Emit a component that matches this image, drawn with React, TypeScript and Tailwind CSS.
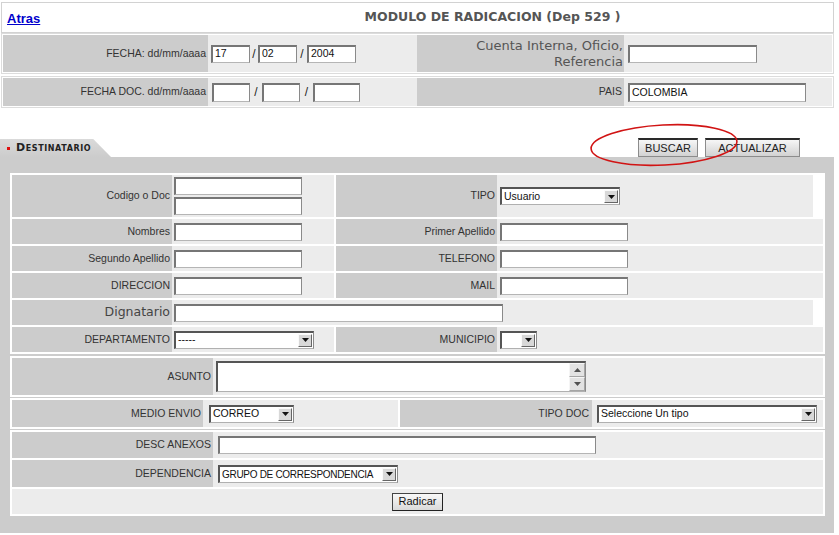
import React from "react"

const label = "flex items-center justify-end bg-[#cccccc] pr-[2px] font-['Liberation_Sans'] text-[10.5px] text-[#333]"
const cell = "flex items-center bg-[#ececec]"

function Field({ w, h = "h-[18px]", value }: { w: string; h?: string; value?: string }) {
  return (
    <div
      className={`${w} ${h} flex items-center border border-l-2 border-t-2 border-[#767676] border-b-[#b5b5b5] border-r-[#8a8a8a] bg-white pl-[2px] font-['Liberation_Sans'] text-[10.5px] text-[#111]`}
    >
      {value}
    </div>
  )
}

function Arrow({ up = false }: { up?: boolean }) {
  return (
    <svg width="7" height="4" viewBox="0 0 7 4" className={up ? "rotate-180" : ""}>
      <path d="M0 0h7L3.5 4z" fill="#111" />
    </svg>
  )
}

function Select({ w, value, text = "text-[10.5px]" }: { w: string; value?: string; text?: string }) {
  return (
    <div
      className={`${w} flex h-[18px] items-stretch border border-l-2 border-t-2 border-[#555] border-b-[#b0b0b0] border-r-[#8a8a8a] bg-white`}
    >
      <span className={`flex flex-1 items-center overflow-hidden whitespace-nowrap pl-[2px] font-['Liberation_Sans'] ${text} text-[#111]`}>
        {value}
      </span>
      <span className="my-[1px] mr-[1px] flex w-[14px] shrink-0 items-center justify-center border border-[#fafafa] border-b-[#666] border-r-[#666] bg-[#d8d8d8]">
        <Arrow />
      </span>
    </div>
  )
}

function TopButton({ w, children }: { w: string; children: React.ReactNode }) {
  return (
    <div
      className={`${w} flex h-[19px] items-center justify-center border border-t-2 border-[#8c8c8c] border-t-[#2a2a2a] bg-gradient-to-b from-[#f6f6f6] to-[#d2d2d2] font-['Liberation_Sans'] text-[11px] text-[#222]`}
    >
      {children}
    </div>
  )
}

export default function App() {
  return (
    <div className="relative h-[535px] w-[839px] overflow-hidden bg-white font-['Liberation_Sans']">
      {/* cabecera y fechas */}
      <div className="ml-[1px] w-[833px] pt-[2px]">
        <div className="flex h-[31px] items-center border border-[#d2d2d2]">
          <div className="w-[150px] pl-[5px]">
            <a href="#" className="text-[13px] font-bold text-[#0000cc] underline">
              Atras
            </a>
          </div>
          <div className="flex-1 text-center font-['DejaVu_Sans'] text-[12.5px] font-bold text-[#555]">
            MODULO DE RADICACION (Dep 529 )
          </div>
        </div>

        <div className="flex h-[41px] border border-[#dcdcdc] p-[1px]">
          <div className={`${label} w-[205px]`}>FECHA: dd/mm/aaaa</div>
          <div className={`${cell} w-[209px] pl-[3px]`}>
            <Field w="w-[39px]" value="17" />
            <span className="w-[8px] text-center text-[12px] text-[#222]">/</span>
            <Field w="w-[39px]" value="02" />
            <span className="w-[10px] text-center text-[12px] text-[#222]">/</span>
            <Field w="w-[49px]" value="2004" />
          </div>
          <div className="flex w-[207px] items-center justify-end bg-[#cccccc] pr-[1px] text-right font-['DejaVu_Sans'] text-[13px] leading-[16px] text-[#555]">
            Cuenta Interna, Oficio,
            <br />
            Referencia
          </div>
          <div className={`${cell} flex-1 pl-[4px]`}>
            <Field w="w-[129px]" />
          </div>
        </div>

        <div className="mt-[2px] flex h-[32px] border border-[#dcdcdc] p-[1px]">
          <div className={`${label} w-[205px]`}>FECHA DOC. dd/mm/aaaa</div>
          <div className={`${cell} w-[209px] pl-[4px]`}>
            <Field w="w-[38px]" h="h-[19px]" />
            <span className="w-[12px] text-center text-[12px] text-[#222]">/</span>
            <Field w="w-[38px]" h="h-[19px]" />
            <span className="w-[13px] text-center text-[12px] text-[#222]">/</span>
            <Field w="w-[47px]" h="h-[19px]" />
          </div>
          <div className={`${label} w-[207px]`}>PAIS</div>
          <div className={`${cell} flex-1 pl-[4px]`}>
            <Field w="w-[178px]" h="h-[19px]" value="COLOMBIA" />
          </div>
        </div>
      </div>

      {/* pestaña y botones */}
      <div className="mt-[30px] flex h-[19px] items-end justify-between">
        <div className="flex h-[18px] w-[111px] items-center bg-gradient-to-b from-[#dadada] to-[#cccccc] pl-[7px] [clip-path:polygon(0_0,84%_0,100%_100%,0_100%)]">
          <span className="mr-[6px] h-[3px] w-[3px] shrink-0 bg-[#e01010]" />
          <span className="whitespace-nowrap font-['DejaVu_Sans'] text-[11px] font-bold tracking-[0.6px] text-[#222] [font-variant:small-caps]">
            Destinatario
          </span>
        </div>
        <div className="mr-[39px] flex gap-[7px] self-start">
          <TopButton w="w-[60px]">BUSCAR</TopButton>
          <TopButton w="w-[95px]">ACTUALIZAR</TopButton>
        </div>
      </div>

      {/* panel destinatario */}
      <div className="w-[834px] bg-[#cccccc] pb-[17px] pl-[10px] pr-[9px] pt-[16px]">
        {/* bloque datos persona */}
        <div className="flex flex-col gap-[2px] bg-white p-[2px]">
          <div className="mr-[10px] flex h-[42px]">
            <div className={`${label} w-[160px] pr-[1px]`}>Codigo o Doc</div>
            <div className={`${cell} w-[162px] flex-col items-start justify-center gap-[2px] pl-[2px]`}>
              <Field w="w-[128px]" />
              <Field w="w-[128px]" />
            </div>
            <div className="w-[2px]" />
            <div className={`${label} w-[161px]`}>TIPO</div>
            <div className={`${cell} flex-1 pl-[3px]`}>
              <Select w="w-[120px]" value="Usuario" />
            </div>
          </div>
          {[
            ["Nombres", "Primer Apellido"],
            ["Segundo Apellido", "TELEFONO"],
            ["DIRECCION", "MAIL"],
          ].map(([a, b]) => (
            <div key={a} className="flex h-[25px]">
              <div className={`${label} w-[160px] pr-[1px]`}>{a}</div>
              <div className={`${cell} w-[162px] pl-[2px]`}>
                <Field w="w-[128px]" />
              </div>
              <div className="w-[2px]" />
              <div className={`${label} w-[161px]`}>{b}</div>
              <div className={`${cell} flex-1 pl-[3px]`}>
                <Field w="w-[128px]" />
              </div>
            </div>
          ))}
          <div className="mr-[10px] flex h-[25px]">
            <div className="flex w-[160px] items-center justify-end bg-[#cccccc] pr-[2px] font-['DejaVu_Sans'] text-[12.5px] text-[#444]">
              Dignatario
            </div>
            <div className={`${cell} flex-1 pl-[2px]`}>
              <Field w="w-[329px]" />
            </div>
          </div>
          <div className="flex h-[25px]">
            <div className={`${label} w-[160px] pr-[1px]`}>DEPARTAMENTO</div>
            <div className={`${cell} w-[162px] pl-[2px]`}>
              <Select w="w-[140px]" value="-----" />
            </div>
            <div className="w-[2px]" />
            <div className={`${label} w-[161px]`}>MUNICIPIO</div>
            <div className={`${cell} flex-1 pl-[3px]`}>
              <Select w="w-[37px]" />
            </div>
          </div>
        </div>

        {/* asunto */}
        <div className="mt-[2px] flex h-[41px] bg-white p-[2px]">
          <div className={`${label} w-[201px]`}>ASUNTO</div>
          <div className={`${cell} flex-1 pl-[3px]`}>
            <div className="flex h-[31px] w-[370px] border border-l-2 border-t-2 border-[#555] border-b-[#b0b0b0] border-r-[#8a8a8a] bg-white">
              <div className="flex-1" />
              <div className="flex w-[16px] flex-col bg-[#ececec]">
                <span className="flex h-[14px] items-center justify-center border border-[#fafafa] border-b-[#888] border-r-[#888] bg-[#dedede] opacity-70">
                  <Arrow up />
                </span>
                <span className="flex-1" />
                <span className="flex h-[14px] items-center justify-center border border-[#fafafa] border-b-[#888] border-r-[#888] bg-[#dedede] opacity-70">
                  <Arrow />
                </span>
              </div>
            </div>
          </div>
        </div>

        {/* medio envio */}
        <div className="mt-[1px] flex h-[31px] bg-white p-[2px]">
          <div className={`${label} w-[191px]`}>MEDIO ENVIO</div>
          <div className={`${cell} w-[195px] pl-[6px]`}>
            <Select w="w-[85px]" value="CORREO" />
          </div>
          <div className="w-[2px]" />
          <div className={`${label} w-[192px] pr-[3px]`}>TIPO DOC</div>
          <div className={`${cell} flex-1 pl-[5px]`}>
            <Select w="w-[220px]" value="Seleccione Un tipo" />
          </div>
        </div>

        {/* anexos */}
        <div className="mt-[1px] flex flex-col gap-[2px] bg-white p-[2px]">
          <div className="flex h-[26px]">
            <div className={`${label} w-[201px]`}>DESC ANEXOS</div>
            <div className={`${cell} flex-1 pl-[5px]`}>
              <Field w="w-[378px]" />
            </div>
          </div>
          <div className="flex h-[27px]">
            <div className={`${label} w-[201px]`}>DEPENDENCIA</div>
            <div className={`${cell} flex-1 pl-[5px]`}>
              <Select w="w-[180px]" value="GRUPO DE CORRESPONDENCIA" text="text-[10px] tracking-[-0.3px]" />
            </div>
          </div>
          <div className={`${cell} h-[25px] justify-center`}>
            <div className="flex h-[18px] w-[51px] items-center justify-center border border-[#444] border-b-[#222] border-r-[#222] bg-gradient-to-b from-[#f8f8f8] to-[#dadada] text-[11px] text-[#111]">
              Radicar
            </div>
          </div>
        </div>
      </div>

      {/* marca roja a mano */}
      <svg className="absolute left-[588px] top-[122px]" width="154" height="48" viewBox="0 0 154 48">
        <ellipse cx="76" cy="23" rx="73" ry="20" fill="none" stroke="#d11414" strokeWidth="1.6" transform="rotate(-3 76 23)" />
      </svg>
    </div>
  )
}
